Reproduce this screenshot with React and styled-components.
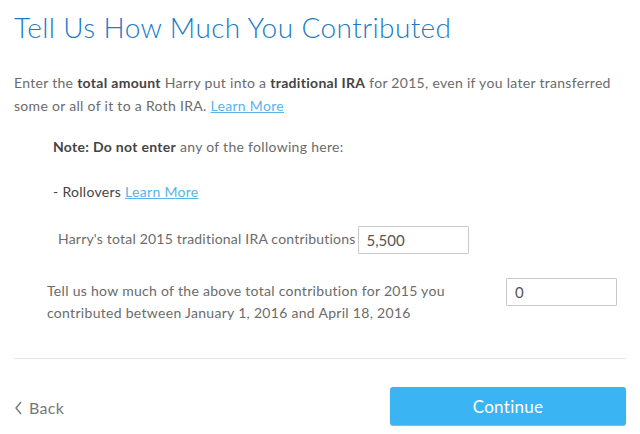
import styled, { createGlobalStyle } from 'styled-components';

const GlobalStyle = createGlobalStyle`
  html, body {
    margin: 0;
    padding: 0;
    background: #fff;
  }
  body {
    font-family: Lato, "Open Sans", Arial, sans-serif;
    color: #6b6b6b;
    letter-spacing: 0.3px;
  }
`;

const Page = styled.div`
  width: 640px;
  height: 434px;
  box-sizing: border-box;
  padding: 7px 14px 0 14px;
  overflow: hidden;
`;

const Title = styled.h1`
  margin: 0;
  font-weight: 300;
  font-size: 28px;
  line-height: 40px;
  color: #1b7bc6;
  letter-spacing: 0.4px;
`;

const Intro = styled.p`
  margin: 24px 0 0 0;
  font-size: 14px;
  line-height: 23px;
`;

const Strong = styled.b`
  color: #444;
  font-weight: 700;
`;

const Link = styled.a`
  color: #5ab3ea;
  text-decoration: underline;
  cursor: pointer;
`;

const NoteBox = styled.div`
  padding-left: 39px;
  margin-top: 18px;
  font-size: 14px;
`;

const NoteLine = styled.div`
  line-height: 23px;
  margin-bottom: ${(p) => p.gap || 0}px;
  color: ${(p) => (p.dark ? '#444' : 'inherit')};
`;

const FieldRow = styled.div`
  display: flex;
  align-items: center;
  padding-left: ${(p) => p.indent}px;
  margin-top: ${(p) => p.top}px;
`;

const Label = styled.label`
  font-size: 14px;
  line-height: 22px;
  color: #6b6b6b;
  letter-spacing: ${(p) => (p.tight ? '0.2px' : 'inherit')};
  width: ${(p) => (p.width ? p.width + 'px' : 'auto')};
  margin-right: ${(p) => p.gap}px;
`;

const Input = styled.input`
  box-sizing: border-box;
  width: 111px;
  height: 28px;
  border: 1px solid #c9c9c9;
  border-radius: 1px;
  padding: 0 8px;
  font-family: Lato, Arial, sans-serif;
  font-size: 15px;
  color: #555;
  outline: none;
  align-self: ${(p) => p.align || 'center'};
  margin-top: ${(p) => p.shift || 0}px;
`;

const Divider = styled.hr`
  margin: 34px 0 0 0;
  border: none;
  border-top: 1px solid #e6e6e6;
`;

const Footer = styled.div`
  display: flex;
  justify-content: space-between;
  align-items: center;
  margin-top: 28px;
`;

const BackLink = styled.a`
  display: flex;
  align-items: center;
  gap: 6px;
  font-size: 16px;
  color: #777;
  margin-top: 3px;
  cursor: pointer;
`;

const ContinueButton = styled.button`
  width: 236px;
  height: 38px;
  border: none;
  border-radius: 3px;
  background: #3ab4f2;
  box-shadow: 0 1px 1px rgba(0, 0, 0, 0.35);
  color: #fff;
  font-family: Lato, Arial, sans-serif;
  font-size: 17px;
  letter-spacing: 0.3px;
  cursor: pointer;
`;

export default function App() {
  return (
    <Page>
      <GlobalStyle />
      <Title>Tell Us How Much You Contributed</Title>
      <Intro>
        Enter the <Strong>total amount</Strong> Harry put into a{' '}
        <Strong>traditional IRA</Strong> for 2015, even if you later transferred
        some or all of it to a Roth IRA. <Link>Learn More</Link>
      </Intro>
      <NoteBox>
        <NoteLine gap={22}>
          <Strong>Note: Do not enter</Strong> any of the following here:
        </NoteLine>
        <NoteLine dark>
          - Rollovers <Link>Learn More</Link>
        </NoteLine>
      </NoteBox>
      <FieldRow indent={44} top={20}>
        <Label tight gap={2}>Harry's total 2015 traditional IRA contributions</Label>
        <Input defaultValue="5,500" shift={3} />
      </FieldRow>
      <FieldRow indent={33} top={26}>
        <Label width={420} gap={39}>
          Tell us how much of the above total contribution for 2015 you
          contributed between January 1, 2016 and April 18, 2016
        </Label>
        <Input defaultValue="0" align="flex-start" shift={-2} />
      </FieldRow>
      <Divider />
      <Footer>
        <BackLink>
          <svg width="9" height="14" viewBox="0 0 9 14">
            <path d="M7 1 L2 7 L7 13" fill="none" stroke="#777" strokeWidth="1.4" />
          </svg>
          Back
        </BackLink>
        <ContinueButton>Continue</ContinueButton>
      </Footer>
    </Page>
  );
}
